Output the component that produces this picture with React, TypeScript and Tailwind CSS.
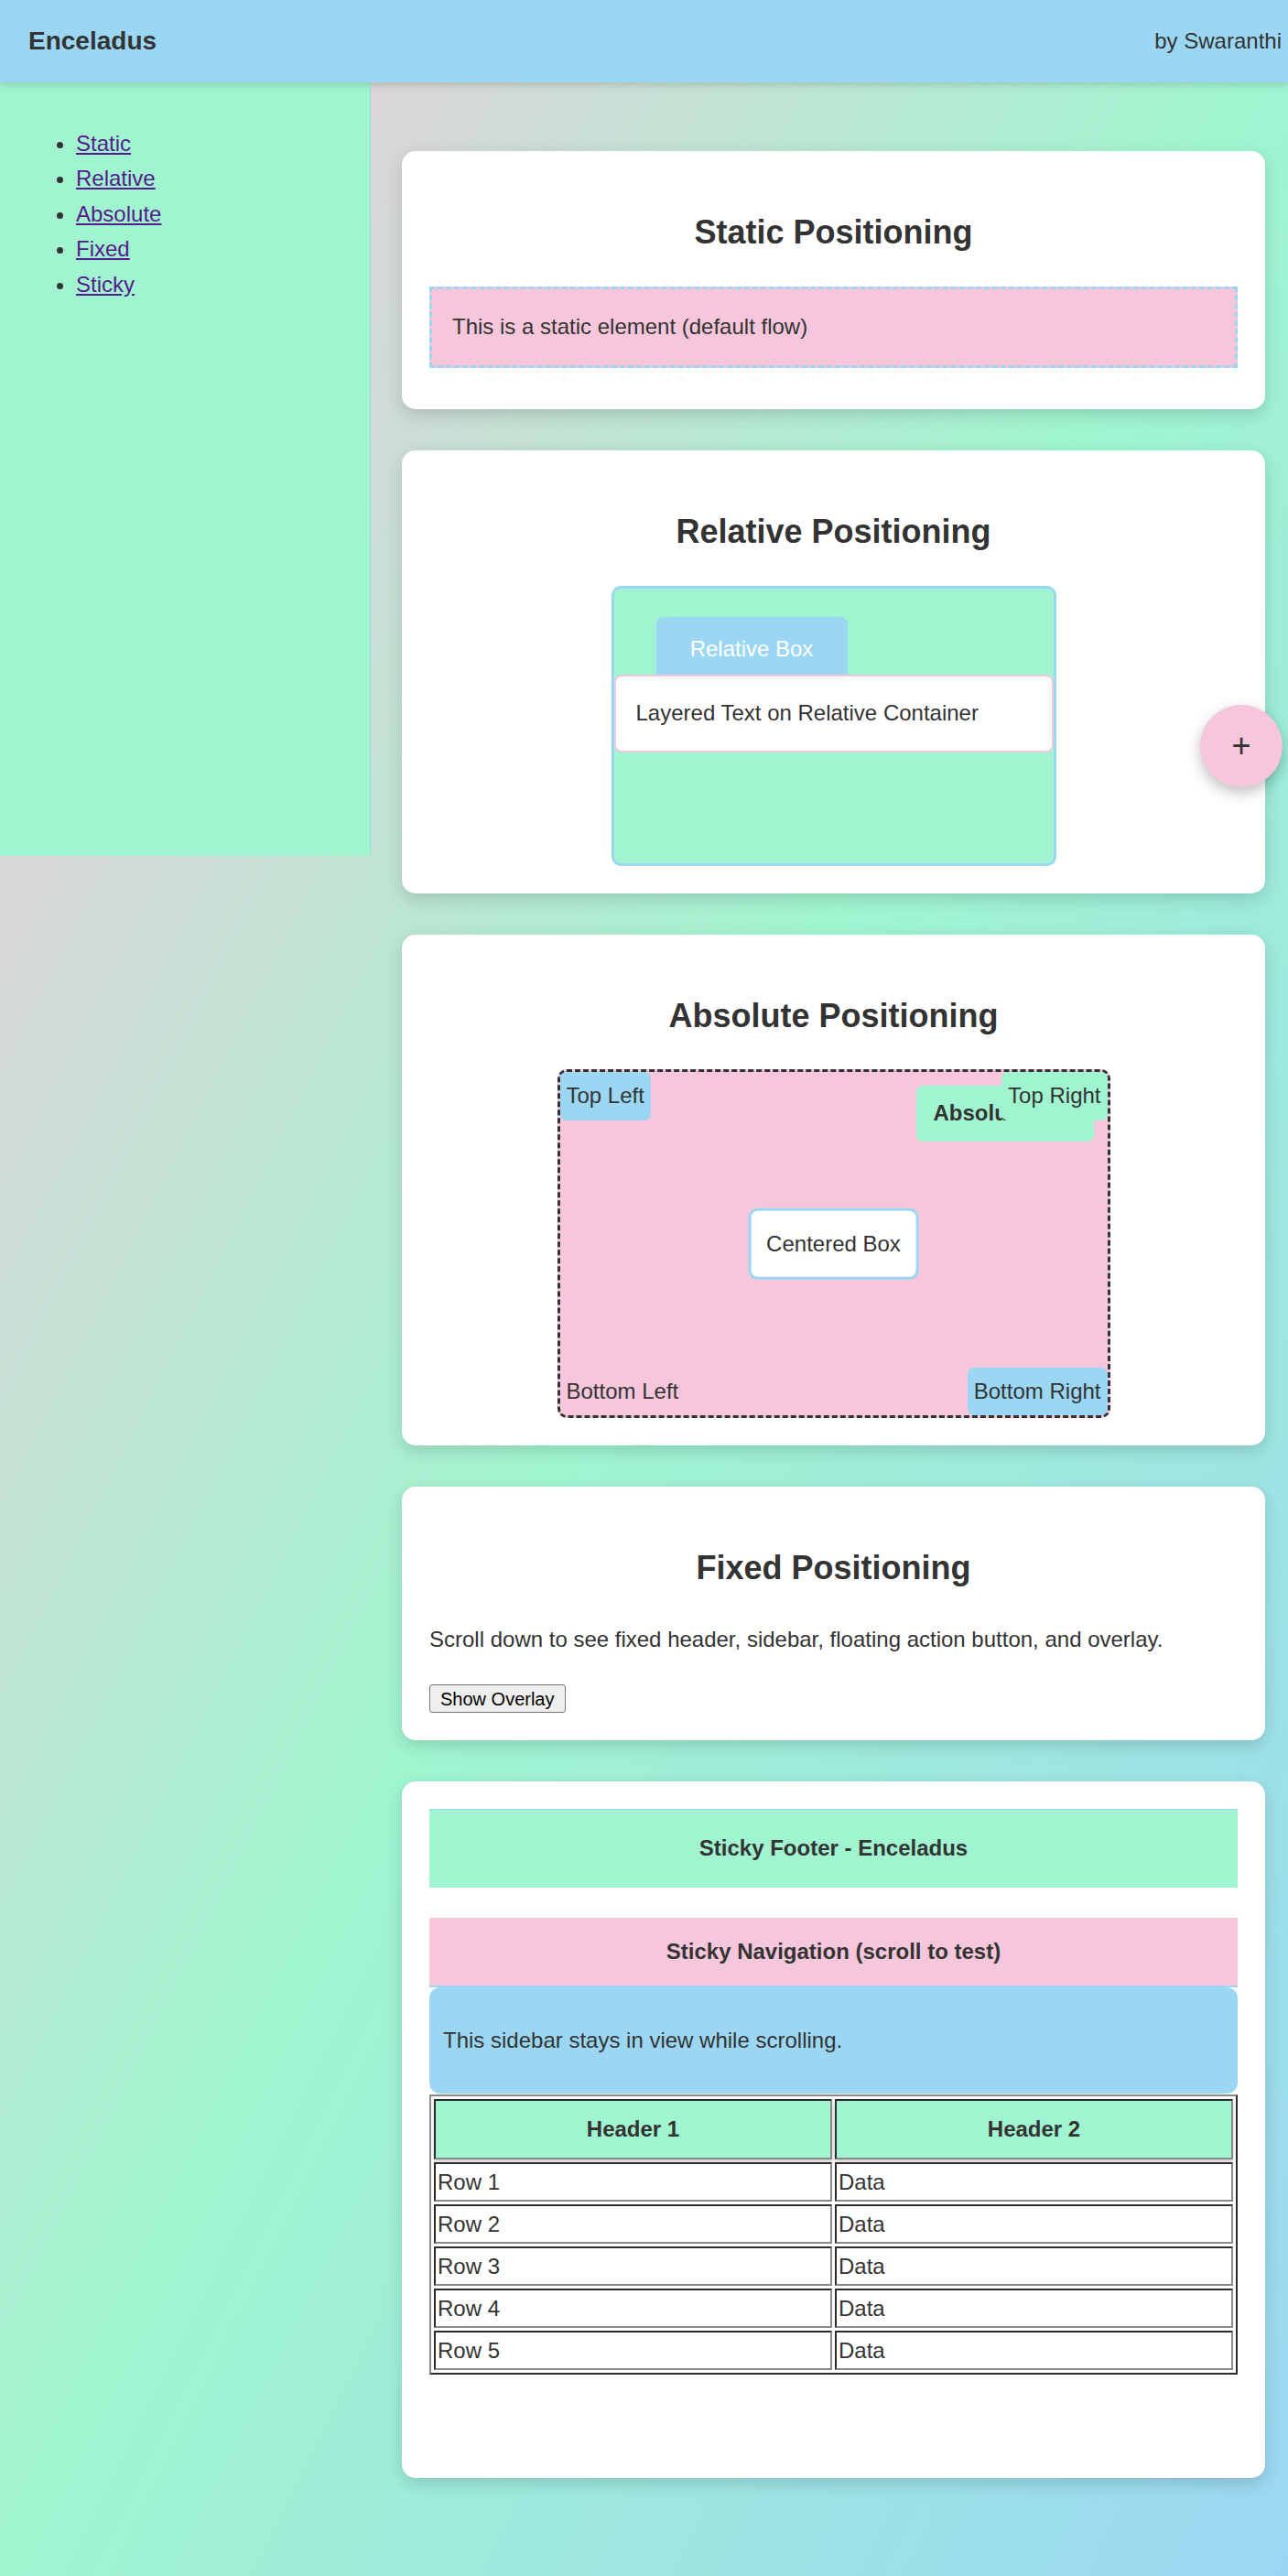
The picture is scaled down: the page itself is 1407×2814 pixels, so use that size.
import React from 'react';

const navLinks = ['Static', 'Relative', 'Absolute', 'Fixed', 'Sticky'];
const rows = [1, 2, 3, 4, 5];

function Card({ children }: { children: React.ReactNode }) {
  return (
    <section className="rounded-[15px] bg-white p-[30px] shadow-[0_6px_18px_rgba(0,0,0,0.15)]">
      {children}
    </section>
  );
}

function Title({ children }: { children: React.ReactNode }) {
  return (
    <h2 className="mt-[30px] mb-[30px] text-center text-[36px] font-bold leading-[1.6]">{children}</h2>
  );
}

export default function App() {
  return (
    <div className="relative min-h-[2814px] bg-[linear-gradient(to_bottom_right,#f6c6da,#a0f5d0,#9bd7f3)] font-['Liberation_Sans',Arial,sans-serif] text-[24px] leading-[1.6] text-[#333]">
      {/* top bar */}
      <header className="relative z-10 flex h-[90px] items-center justify-between bg-[#9bd7f3] pl-[31px] pr-[7px] shadow-[0_3px_8px_rgba(0,0,0,0.15)]">
        <h1 className="text-[28px] font-bold">Enceladus</h1>
        <span>by Swaranthi</span>
      </header>

      <div className="flex items-start">
        <aside className="h-[845px] w-[405px] shrink-0 border-r border-[#9bd7f3] bg-[#a0f5d0] pl-[23px] pt-[24px]">
          <ul className="mt-[24px] list-disc pl-[60px]">
            {navLinks.map((l) => (
              <li key={l}>
                <a href={`#${l.toLowerCase()}`} className="text-[#551a8b] underline">
                  {l}
                </a>
              </li>
            ))}
          </ul>
        </aside>

        <main className="flex flex-1 flex-col gap-[45px] pl-[34px] pr-[25px] pt-[75px]">
          {/* static */}
          <Card>
            <Title>Static Positioning</Title>
            <div className="mb-[15px] border-[3px] border-dashed border-[#9bd7f3] bg-[#f6c6da] px-[22px] py-[22.5px]">
              This is a static element (default flow)
            </div>
          </Card>

          {/* relative */}
          <Card>
            <Title>Relative Positioning</Title>
            <div className="relative mx-auto h-[306px] w-[486px] rounded-[10px] border-[3px] border-[#9bd7f3] bg-[#a0f5d0]">
              <div className="ml-[46px] mt-[31px] flex h-[72px] w-[209px] items-center justify-center rounded-[8px] bg-[#9bd7f3] text-white">
                Relative Box
              </div>
              <div className="absolute left-0 right-0 top-[94px] rounded-[8px] border-2 border-[#f6c6da] bg-white px-[22px] py-[21.5px]">
                Layered Text on Relative Container
              </div>
            </div>
          </Card>

          {/* absolute */}
          <Card>
            <Title>Absolute Positioning</Title>
            <div className="relative mx-auto h-[381px] w-[604px] rounded-[10px] border-[3px] border-dashed border-[#333] bg-[#f6c6da]">
              <div className="absolute right-[15px] top-[15px] w-[194px] rounded-[7px] bg-[#a0f5d0] py-[11px] pl-[19px] font-bold">
                Absolute Item
              </div>
              <div className="absolute left-0 top-0 rounded-[7px] bg-[#9bd7f3] p-[7px]">Top Left</div>
              <div className="absolute right-0 top-0 rounded-[7px] bg-[#a0f5d0] p-[7px]">Top Right</div>
              <div className="absolute left-1/2 top-1/2 -translate-x-1/2 -translate-y-1/2 whitespace-nowrap rounded-[10px] border-[3px] border-[#9bd7f3] bg-white px-[17px] py-[17px]">
                Centered Box
              </div>
              <div className="absolute bottom-0 left-0 p-[7px]">Bottom Left</div>
              <div className="absolute bottom-0 right-0 rounded-[7px] bg-[#9bd7f3] p-[7px]">Bottom Right</div>
            </div>
          </Card>

          {/* fixed */}
          <Card>
            <Title>Fixed Positioning</Title>
            <p>Scroll down to see fixed header, sidebar, floating action button, and overlay.</p>
            <button className="mt-[30px] block h-[31px] rounded-[3px] border border-[#767676] bg-[#efefef] px-[11px] text-[20px] leading-none text-black">
              Show Overlay
            </button>
          </Card>

          {/* sticky */}
          <Card>
            <div className="border-t border-[#9bd7f3] bg-[#a0f5d0] py-[23px] text-center font-bold">
              Sticky Footer - Enceladus
            </div>
            <div className="mt-[33px] border-b-2 border-[#9bd7f3] bg-[#f6c6da] py-[18px] text-center font-bold">
              Sticky Navigation (scroll to test)
            </div>
            <div className="rounded-[12px] bg-[#9bd7f3] px-[15px] py-[15px]">
              <p className="my-[24px]">This sidebar stays in view while scrolling.</p>
            </div>
            <table className="mb-[83px] mt-[1px] w-full table-fixed border-separate border-spacing-[3px] border-2 border-t-[#8a8a8a] border-l-[#8a8a8a] border-r-[#2b2b2b] border-b-[#2b2b2b]">
              <thead>
                <tr>
                  <th className="border-2 border-t-[#2b2b2b] border-l-[#2b2b2b] border-r-[#8a8a8a] border-b-[#8a8a8a] bg-[#a0f5d0] py-[11.5px] text-center font-bold leading-[1.6] shadow-[0_3px_4px_rgba(0,0,0,0.18)]">
                    Header 1
                  </th>
                  <th className="border-2 border-t-[#2b2b2b] border-l-[#2b2b2b] border-r-[#8a8a8a] border-b-[#8a8a8a] bg-[#a0f5d0] py-[11.5px] text-center font-bold leading-[1.6] shadow-[0_3px_4px_rgba(0,0,0,0.18)]">
                    Header 2
                  </th>
                </tr>
              </thead>
              <tbody>
                {rows.map((r) => (
                  <tr key={r}>
                    <td className="border-2 border-t-[#2b2b2b] border-l-[#2b2b2b] border-r-[#8a8a8a] border-b-[#8a8a8a] px-[2px] leading-[39px]">
                      Row {r}
                    </td>
                    <td className="border-2 border-t-[#2b2b2b] border-l-[#2b2b2b] border-r-[#8a8a8a] border-b-[#8a8a8a] px-[2px] leading-[39px]">
                      Data
                    </td>
                  </tr>
                ))}
              </tbody>
            </table>
          </Card>
        </main>
      </div>

      {/* floating action button */}
      <button className="absolute left-[1311px] top-[770px] z-20 flex h-[90px] w-[90px] items-center justify-center rounded-full bg-[#f6c6da] text-[36px] leading-none text-[#333] shadow-[0_6px_15px_rgba(0,0,0,0.25)]">
        +
      </button>
    </div>
  );
}
